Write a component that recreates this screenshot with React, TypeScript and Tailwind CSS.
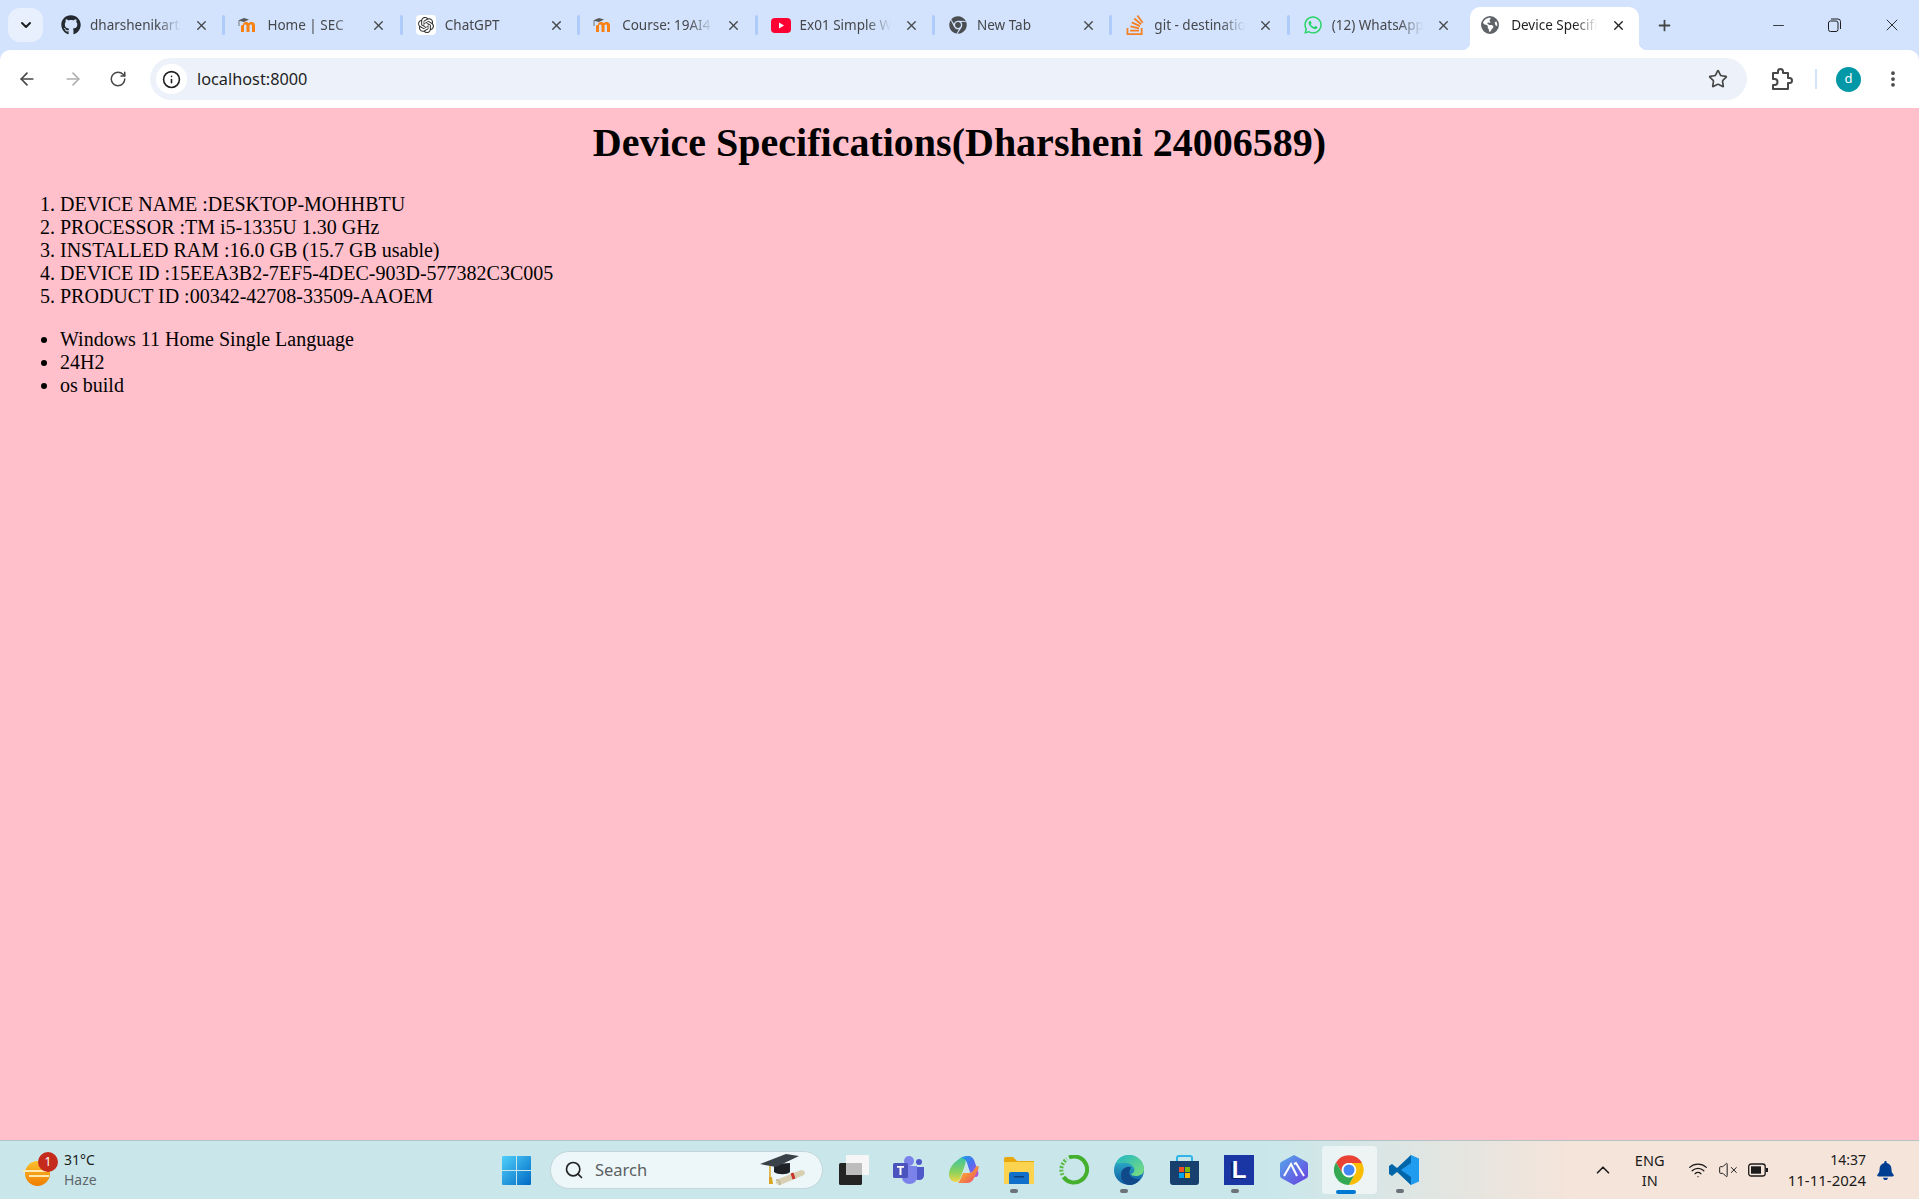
import { ArrowLeft, ArrowRight, RotateCw, Info, Star, EllipsisVertical, X, Plus, Minus, ChevronDown, ChevronUp, Search, Wifi, VolumeX } from "lucide-react";
import { FaGithub, FaChrome, FaWhatsapp, FaBell } from "react-icons/fa";
import { FaEarthAmericas } from "react-icons/fa6";
import { SiOpenai, SiStackoverflow } from "react-icons/si";
import type { ReactNode } from "react";

const MoodleIcon = () => (
  <svg width="20" height="20" viewBox="0 0 20 20">
    <path d="M5 10c0-2 1-3 3-3 1.300 0 2.200.5 2.700 1.300C11.300 7.500 12.300 7 13.500 7 15.800 7 17 8.200 17 10.500V17h-3v-6c0-1-.4-1.500-1.200-1.500S11.500 10 11.500 11v6h-3v-6c0-1-.4-1.500-1.200-1.500S6 10 6 11v6H3v-6c0-.4 1-1 2-1z" fill="#f98012" />
    <path d="M0 5.500 6 3l5 1.500L6 7z" fill="#58595b" />
    <path d="M1 6v5" stroke="#58595b" strokeWidth="0.800" />
  </svg>
);

const YoutubeIcon = () => (
  <svg width="20" height="20" viewBox="0 0 20 20">
    <rect x="0" y="3" width="20" height="15" rx="4" fill="#ff0033" />
    <path d="M8 7.500v6l5-3z" fill="#fff" />
  </svg>
);

const ChromeLogo = () => (
  <svg width="30" height="30" viewBox="0 0 30 30">
    <path d="M15 8h13A15 15 0 0 0 2 7.500L8.900 19A7 7 0 0 1 15 8z" fill="#ea4335" />
    <path d="M2 7.500A15 15 0 0 0 15 30l6-11a7 7 0 0 1-12.100 0z" fill="#34a853" />
    <path d="M15 8h13a15 15 0 0 1-13 22l6-11a7 7 0 0 0-6-11z" fill="#fbbc04" />
    <circle cx="15" cy="15" r="7" fill="#fff" />
    <circle cx="15" cy="15" r="5.500" fill="#4285f4" />
  </svg>
);

const WindowsLogo = () => (
  <svg width="29" height="29" viewBox="0 0 29 29">
    <defs>
      <linearGradient id="win" x1="0" y1="0" x2="1" y2="1">
        <stop offset="0" stopColor="#4fd0fb" />
        <stop offset="1" stopColor="#0069c4" />
      </linearGradient>
    </defs>
    <path d="M1 0h13v14H0V1a1 1 0 0 1 1-1zM15 0h13a1 1 0 0 1 1 1v13H15zM0 15h14v14H1a1 1 0 0 1-1-1zM15 15h14v13a1 1 0 0 1-1 1H15z" fill="url(#win)" />
  </svg>
);

const CapIcon = () => (
  <svg width="48" height="34" viewBox="0 0 48 34">
    <path d="M14 11v8c4 3 13 3 16 0v-9z" fill="#1e2227" />
    <path d="M0 11 26 1l13 2-23 11z" fill="#3a4149" />
    <path d="M10 13v12" stroke="#d9a520" strokeWidth="1.500" />
    <path d="M9 24h3l1 7H9z" fill="#d9a520" />
    <path d="m16 27 25-10c2 0 4 1 4 3l-1 2-24 10c-3 0-5-2-4-5z" fill="#d9cfb2" />
    <path d="m16 27c2-1 4 1 4 5" fill="none" stroke="#a89e80" strokeWidth="1" />
    <path d="m32 20 2 6" stroke="#c8332c" strokeWidth="3" />
  </svg>
);

const TaskViewIcon = () => (
  <svg width="30" height="30" viewBox="0 0 30 30">
    <rect x="0" y="8" width="23" height="22" rx="1.500" fill="#242424" />
    <rect x="7" y="0" width="23" height="20" rx="1" fill="#f6f6f6" />
    <rect x="7" y="8" width="16" height="12" fill="#bdbdbd" />
  </svg>
);

const TeamsIcon = () => (
  <svg width="31" height="28" viewBox="0 0 31 28">
    <circle cx="26" cy="6" r="3" fill="#5059c9" />
    <path d="M21 11h10v8c0 3-2 5-5 5s-5-2-5-5z" fill="#5059c9" />
    <circle cx="16" cy="5" r="5" fill="#7b83eb" />
    <path d="M9 10h15v11c0 4-3 7-7.500 7S9 25 9 21z" fill="#7b83eb" />
    <rect x="0" y="7" width="15" height="15" rx="1.500" fill="#4b53bc" />
    <path d="M4 10h7v1.800H8.500V19h-2v-7.200H4z" fill="#fff" />
  </svg>
);

const CopilotIcon = () => (
  <svg width="30" height="28" viewBox="0 0 30 28">
    <defs>
      <linearGradient id="cpa" x1="0" y1="0" x2="1" y2="1">
        <stop offset="0" stopColor="#1aa3e8" />
        <stop offset="0.500" stopColor="#4f6df0" />
        <stop offset="1" stopColor="#c44fd8" />
      </linearGradient>
      <linearGradient id="cpb" x1="0" y1="0" x2="1" y2="1">
        <stop offset="0" stopColor="#f8c93e" />
        <stop offset="0.500" stopColor="#f58b3c" />
        <stop offset="1" stopColor="#e9437a" />
      </linearGradient>
      <linearGradient id="cpc" x1="0" y1="0" x2="0" y2="1">
        <stop offset="0" stopColor="#3fc4a0" />
        <stop offset="0.600" stopColor="#8bd25a" />
        <stop offset="1" stopColor="#f3d54a" />
      </linearGradient>
    </defs>
    <path d="M10 3 5 7C2 10 0 14 0 18c0 5 3 8 7 8 2 0 3-1 4-3l5-14c1-3 1-7-1-7-2-1-4 0-5 1z" fill="url(#cpc)" />
    <path d="M12 2c1-1 3-2 5-2h3c2 0 4 2 5 4l4 11c1 3 0 6-2 6-3 0-5-2-6-5l-3-9c-1-3-3-5-6-5z" fill="url(#cpa)" />
    <path d="M9 27h9c3 0 6-2 7-5l4-8c1-2 1-4 0-4-2 0-3 2-4 4-2 3-5 3-7 3h-4l-2 5c-1 2-2 4-3 5z" fill="url(#cpb)" />
  </svg>
);

const FolderIcon = () => (
  <svg width="30" height="28" viewBox="0 0 30 28">
    <path d="M0 3a2 2 0 0 1 2-2h7l4 4h17v4H0z" fill="#e8a70d" />
    <path d="M0 6h30v21a1 1 0 0 1-1 1H1a1 1 0 0 1-1-1z" fill="#fcd34e" />
    <path d="M5 18a2 2 0 0 1 2-2h16a2 2 0 0 1 2 2v10H5z" fill="#1170c9" />
    <rect x="10" y="20" width="10" height="1.500" fill="#0b3f78" />
  </svg>
);

const RingIcon = () => (
  <svg width="30" height="30" viewBox="0 0 30 30">
    <path d="M10 2.500A13 13 0 1 1 4.500 22" fill="none" stroke="#45b02d" strokeWidth="4" />
    <path d="M3.500 20A13 13 0 0 1 8 4" fill="none" stroke="#5cbb47" strokeWidth="4" strokeDasharray="2 1.500" />
  </svg>
);

const EdgeIcon = () => (
  <svg width="30" height="30" viewBox="0 0 30 30">
    <defs>
      <linearGradient id="eda" x1="0" y1="0" x2="0" y2="1">
        <stop offset="0" stopColor="#36c0d0" />
        <stop offset="1" stopColor="#0c59a4" />
      </linearGradient>
      <linearGradient id="edb" x1="0" y1="0" x2="1" y2="1">
        <stop offset="0" stopColor="#1fb6c4" />
        <stop offset="1" stopColor="#7fe07a" />
      </linearGradient>
    </defs>
    <circle cx="15" cy="15" r="15" fill="url(#eda)" />
    <path d="M2 8C5 2 10 0 15 0c8 0 15 6 15 14 0 5-4 7-8 7-3 0-5-1-5-2 3-1 4-3 3-6-2-4-7-6-11-5-3 0-5 1-7 0z" fill="url(#edb)" />
    <path d="M16 30c-5 0-9-4-9-10 0-5 4-9 9-8 2 0 1 1 0 3-2 4 1 8 6 9 2 0 3 0 4 0-3 4-6 6-10 6z" fill="#114a8b" />
  </svg>
);

const StoreIcon = () => (
  <svg width="29" height="30" viewBox="0 0 29 30">
    <path d="M7 6V3a2 2 0 0 1 2-2h11a2 2 0 0 1 2 2v3" fill="none" stroke="#2fb4ea" strokeWidth="2" />
    <path d="M0 6h29v21a3 3 0 0 1-3 3H3a3 3 0 0 1-3-3z" fill="#17406f" />
    <rect x="9" y="12" width="5" height="5" fill="#f25022" />
    <rect x="15" y="12" width="5" height="5" fill="#7fba00" />
    <rect x="9" y="18" width="5" height="5" fill="#00a4ef" />
    <rect x="15" y="18" width="5" height="5" fill="#ffb900" />
  </svg>
);

const HexIcon = () => (
  <svg width="28" height="30" viewBox="0 0 28 30">
    <defs>
      <linearGradient id="hex" x1="0" y1="0" x2="1" y2="1">
        <stop offset="0" stopColor="#55a8ea" />
        <stop offset="1" stopColor="#6a3fe0" />
      </linearGradient>
    </defs>
    <path d="M14 0l12 6.500a3 3 0 0 1 2 3v11a3 3 0 0 1-2 3L14 30 2 23.500a3 3 0 0 1-2-3v-11a3 3 0 0 1 2-3z" fill="url(#hex)" />
    <path d="M4 21 11 9l6 12M14 9l2-1 8 13" fill="none" stroke="#fff" strokeWidth="2" />
  </svg>
);

const VscodeIcon = () => (
  <svg width="30" height="30" viewBox="0 0 30 30">
    <path d="M22 0l8 3.500v23L22 30 8 16z" fill="#1f9cf0" />
    <path d="M22 0v8L12 15 22 22v8L8 17l-5 4-3-2v-8l3-2 5 4z" fill="#0065a9" />
  </svg>
);

const PuzzleIcon = () => (
  <svg width="22" height="24" viewBox="0 0 22 24" fill="none" stroke="#474747" strokeWidth="2" strokeLinejoin="round">
    <path d="M2 6h5V4.500a2.500 2.500 0 0 1 5 0V6h5v5h1.500a2.500 2.500 0 0 1 0 5H17v6H2v-4h1.500a3 3 0 0 0 0-6H2z" />
  </svg>
);

const tabs: { title: string; icon: ReactNode }[] = [
  { title: "dharshenikarthik", icon: <FaGithub className="w-5 h-5 text-[#24292f]" /> },
  { title: "Home | SEC", icon: <MoodleIcon /> },
  {
    title: "ChatGPT",
    icon: (
      <div className="w-5 h-5 bg-white rounded flex items-center justify-center">
        <SiOpenai className="w-4 h-4 text-[#333]" />
      </div>
    ),
  },
  { title: "Course: 19AI414", icon: <MoodleIcon /> },
  { title: "Ex01 Simple Webpage", icon: <YoutubeIcon /> },
  { title: "New Tab", icon: <FaChrome className="w-[18px] h-[18px] text-[#4a4d51]" /> },
  { title: "git - destination path", icon: <SiStackoverflow className="w-5 h-5 text-[#f48024]" /> },
  { title: "(12) WhatsApp", icon: <FaWhatsapp className="w-5 h-5 text-[#25d366]" /> },
];

const Tab = ({ title, icon, last }: { title: string; icon: ReactNode; last?: boolean }) => (
  <div className="relative w-[177.400px] h-full flex items-center pl-[13px] shrink-0">
    <div className="w-5 h-5 flex items-center justify-center shrink-0">{icon}</div>
    <div className="ml-[9px] w-[93px] overflow-hidden whitespace-nowrap text-[13.500px] text-[#45474a] [mask-image:linear-gradient(to_right,black_72%,transparent_98%)]">
      {title}
    </div>
    <X className="ml-[11px] w-[15px] h-[15px] text-[#45474a] shrink-0" strokeWidth={2.2} />
    {!last && <div className="absolute right-0 top-[15px] w-[3px] h-[20px] rounded-full bg-[#aecbfa]" />}
  </div>
);

const TrayCell = ({ children, active }: { children: ReactNode; active?: boolean }) => (
  <div className={`relative w-[55.100px] h-[48px] flex items-center justify-center shrink-0 rounded ${active ? "bg-white/55" : ""}`}>
    {children}
  </div>
);

const Dot = ({ active }: { active?: boolean }) =>
  active ? (
    <div className="absolute bottom-0 left-[14px] w-[20px] h-[4px] rounded-full bg-[#0078d4]" />
  ) : (
    <div className="absolute bottom-[1px] left-[19px] w-[8px] h-[4px] rounded-full bg-[#6b7278]" />
  );

const Taskbar = () => (
  <div className="h-[59px] shrink-0 flex items-center border-t border-[#b3c3c8] bg-[linear-gradient(to_right,#c9e7eb_0%,#c9e7eb_66%,#f5e4da_82%,#f5e4da_100%)] font-['Noto_Sans',sans-serif]">
    <div className="w-[502px] shrink-0 pl-[25px] flex items-center">
      <div className="relative w-[27px] h-[25px] mt-[6px]">
        <div className="w-[25px] h-[25px] rounded-full bg-[linear-gradient(to_bottom,#fbc02d,#ef7d00)]" />
        <div className="absolute left-[-2px] top-[9px] w-[24px] h-[2px] bg-[#ffe9b0]" />
        <div className="absolute left-[4px] top-[14px] w-[20px] h-[2px] bg-[#ffe9b0]" />
        <div className="absolute left-[13px] top-[-9px] w-[20px] h-[20px] rounded-full bg-[#c42b1c] text-white text-[12px] leading-[20px] text-center">1</div>
      </div>
      <div className="ml-[12px] flex flex-col text-[14px] leading-[20px]">
        <span className="text-[#1b1b1b]">31°C</span>
        <span className="text-[#5f666b]">Haze</span>
      </div>
    </div>
    <WindowsLogo />
    <div className="ml-[19px] w-[273px] h-[38px] rounded-full bg-[#edf7f9] border border-[#c3d6da] flex items-center pl-[13px] pr-[14px] shrink-0">
      <Search className="w-[20px] h-[20px] text-[#222]" strokeWidth={2} />
      <span className="ml-[11px] text-[16.500px] text-[#5b5f62]">Search</span>
      <div className="ml-auto">
        <CapIcon />
      </div>
    </div>
    <div className="ml-[3px] flex items-center">
      <TrayCell><TaskViewIcon /></TrayCell>
      <TrayCell><TeamsIcon /></TrayCell>
      <TrayCell><CopilotIcon /></TrayCell>
      <TrayCell><FolderIcon /><Dot /></TrayCell>
      <TrayCell><RingIcon /></TrayCell>
      <TrayCell><EdgeIcon /><Dot /></TrayCell>
      <TrayCell><StoreIcon /></TrayCell>
      <TrayCell>
        <div className="w-[30px] h-[30px] bg-[#1a36a5] flex items-center justify-center text-white font-bold text-[24px] font-['Liberation_Sans',sans-serif] [text-shadow:-2px_1px_0_#0b1f66]">L</div>
        <Dot />
      </TrayCell>
      <TrayCell><HexIcon /></TrayCell>
      <TrayCell active><ChromeLogo /><Dot active /></TrayCell>
      <TrayCell><VscodeIcon /><Dot /></TrayCell>
    </div>
    <div className="ml-auto flex items-center text-[#1b1b1b]">
      <ChevronUp className="w-[22px] h-[22px]" strokeWidth={1.800} />
      <div className="ml-[16px] w-[40px] flex flex-col items-center text-[14.500px] leading-[20px]">
        <span>ENG</span>
        <span>IN</span>
      </div>
      <Wifi className="ml-[18px] w-[20px] h-[20px]" strokeWidth={1.500} />
      <VolumeX className="ml-[10px] w-[20px] h-[20px]" strokeWidth={1.200} />
      <svg className="ml-[10px]" width="20" height="14" viewBox="0 0 20 14">
        <rect x="0.700" y="1" width="16.500" height="12" rx="2.500" fill="none" stroke="#1b1b1b" strokeWidth="1.300" />
        <rect x="3" y="3.300" width="10" height="7.400" fill="#1b1b1b" />
        <rect x="18" y="5" width="2" height="4" fill="#1b1b1b" />
      </svg>
      <div className="ml-[20px] flex flex-col items-end leading-[20px]">
        <span className="text-[14px]">14:37</span>
        <span className="text-[15px]">11-11-2024</span>
      </div>
      <FaBell className="ml-[11px] mr-[25px] w-[17px] h-[19px] text-[#003e92]" />
    </div>
  </div>
);

const App = () => {
  return (
    <div className="h-screen w-full flex flex-col overflow-hidden font-['Noto_Sans',sans-serif]">
      <div className="h-[50px] shrink-0 bg-[#d3e3fd] flex">
        <div className="ml-2 mt-2 w-[35px] h-[34px] rounded-xl bg-[#e8f0fe] flex items-center justify-center shrink-0">
          <ChevronDown className="w-4 h-4 text-[#1f1f1f]" strokeWidth={3} />
        </div>
        <div className="ml-[5px] flex h-full">
          {tabs.map((t, i) => (
            <Tab key={t.title} title={t.title} icon={t.icon} last={i === tabs.length - 1} />
          ))}
        </div>
        <div className="relative ml-[3px] mt-[7px] w-[169px] h-[43px] bg-white rounded-t-[10px] flex items-center pl-[11px] pb-[7px] shrink-0">
          <div className="absolute left-[-8px] bottom-0 w-2 h-2 bg-[radial-gradient(circle_at_0_0,transparent_8px,white_8.500px)]" />
          <div className="absolute right-[-8px] bottom-0 w-2 h-2 bg-[radial-gradient(circle_at_100%_0,transparent_8px,white_8.500px)]" />
          <FaEarthAmericas className="w-[18px] h-[18px] text-[#5f6368] shrink-0" />
          <div className="ml-[12px] w-[88px] overflow-hidden whitespace-nowrap text-[13.500px] text-[#1f1f1f] [mask-image:linear-gradient(to_right,black_72%,transparent_98%)]">
            Device Specifications
          </div>
          <X className="ml-[12px] w-[15px] h-[15px] text-[#1f1f1f] shrink-0" strokeWidth={2.2} />
        </div>
        <Plus className="ml-[17px] mt-[17px] w-[17px] h-[17px] text-[#444746] shrink-0" strokeWidth={2.5} />
        <div className="ml-auto flex text-[#1f1f1f]">
          <div className="w-[52px] flex items-center justify-center"><Minus className="w-[17px] h-[17px]" strokeWidth={1.200} /></div>
          <div className="w-[60px] flex items-center justify-center">
            <svg width="13" height="14" viewBox="0 0 13 14" fill="none" stroke="#1f1f1f" strokeWidth="1">
              <rect x="0.500" y="3" width="9.500" height="10.500" rx="2" />
              <path d="M3 1h7a2.500 2.500 0 0 1 2.500 2.500V11" />
            </svg>
          </div>
          <div className="w-[55px] flex items-center justify-center"><X className="w-[20px] h-[20px]" strokeWidth={1.100} /></div>
        </div>
      </div>

      <div className="h-[58px] shrink-0 bg-[#d3e3fd]">
        <div className="h-full bg-white rounded-t-[10px] flex items-center pl-[4px]">
          <div className="w-[46px] flex justify-center"><ArrowLeft className="w-[20px] h-[20px] text-[#474747]" strokeWidth={2} /></div>
          <div className="w-[46px] flex justify-center"><ArrowRight className="w-[20px] h-[20px] text-[#b0b0b0]" strokeWidth={2} /></div>
          <div className="w-[44px] flex justify-center"><RotateCw className="w-[18px] h-[18px] text-[#474747]" strokeWidth={2} /></div>
          <div className="ml-[10px] flex-1 h-[42px] rounded-full bg-[#edf2fa] flex items-center pl-[6px] pr-[19px]">
            <div className="w-[31px] h-[30px] rounded-full bg-white flex items-center justify-center">
              <Info className="w-[19px] h-[19px] text-[#1f1f1f]" strokeWidth={2} />
            </div>
            <span className="ml-[10px] text-[16.300px] text-[#1f1f1f]">localhost:8000</span>
            <Star className="ml-auto w-[20px] h-[20px] text-[#474747]" strokeWidth={2} />
          </div>
          <div className="w-[172px] flex items-center shrink-0">
            <div className="ml-[24px]"><PuzzleIcon /></div>
            <div className="ml-[22px] w-[2px] h-[20px] bg-[#d3e3fd]" />
            <div className="ml-[19px] w-[25px] h-[25px] rounded-full bg-[#0097a7] text-white text-[13px] flex items-center justify-center">d</div>
            <EllipsisVertical className="ml-[22px] w-[20px] h-[20px] text-[#474747]" strokeWidth={2.5} />
          </div>
        </div>
      </div>

      <div className="flex-1 bg-[#ffc0cb] text-black font-['Liberation_Serif',serif] text-[20px] leading-[23px] pt-[12px] px-[10px] overflow-hidden">
        <h1 className="text-[40px] leading-[46px] font-bold text-center">Device Specifications(Dharsheni 24006589)</h1>
        <ol className="list-decimal pl-[50px] mt-[27px]">
          <li>DEVICE NAME :DESKTOP-MOHHBTU</li>
          <li>PROCESSOR :TM i5-1335U 1.30 GHz</li>
          <li>INSTALLED RAM :16.0 GB (15.7 GB usable)</li>
          <li>DEVICE ID :15EEA3B2-7EF5-4DEC-903D-577382C3C005</li>
          <li>PRODUCT ID :00342-42708-33509-AAOEM</li>
        </ol>
        <ul className="list-disc pl-[50px] mt-[20px]">
          <li>Windows 11 Home Single Language</li>
          <li>24H2</li>
          <li>os build</li>
        </ul>
      </div>

      <Taskbar />
    </div>
  );
};

export default App;
